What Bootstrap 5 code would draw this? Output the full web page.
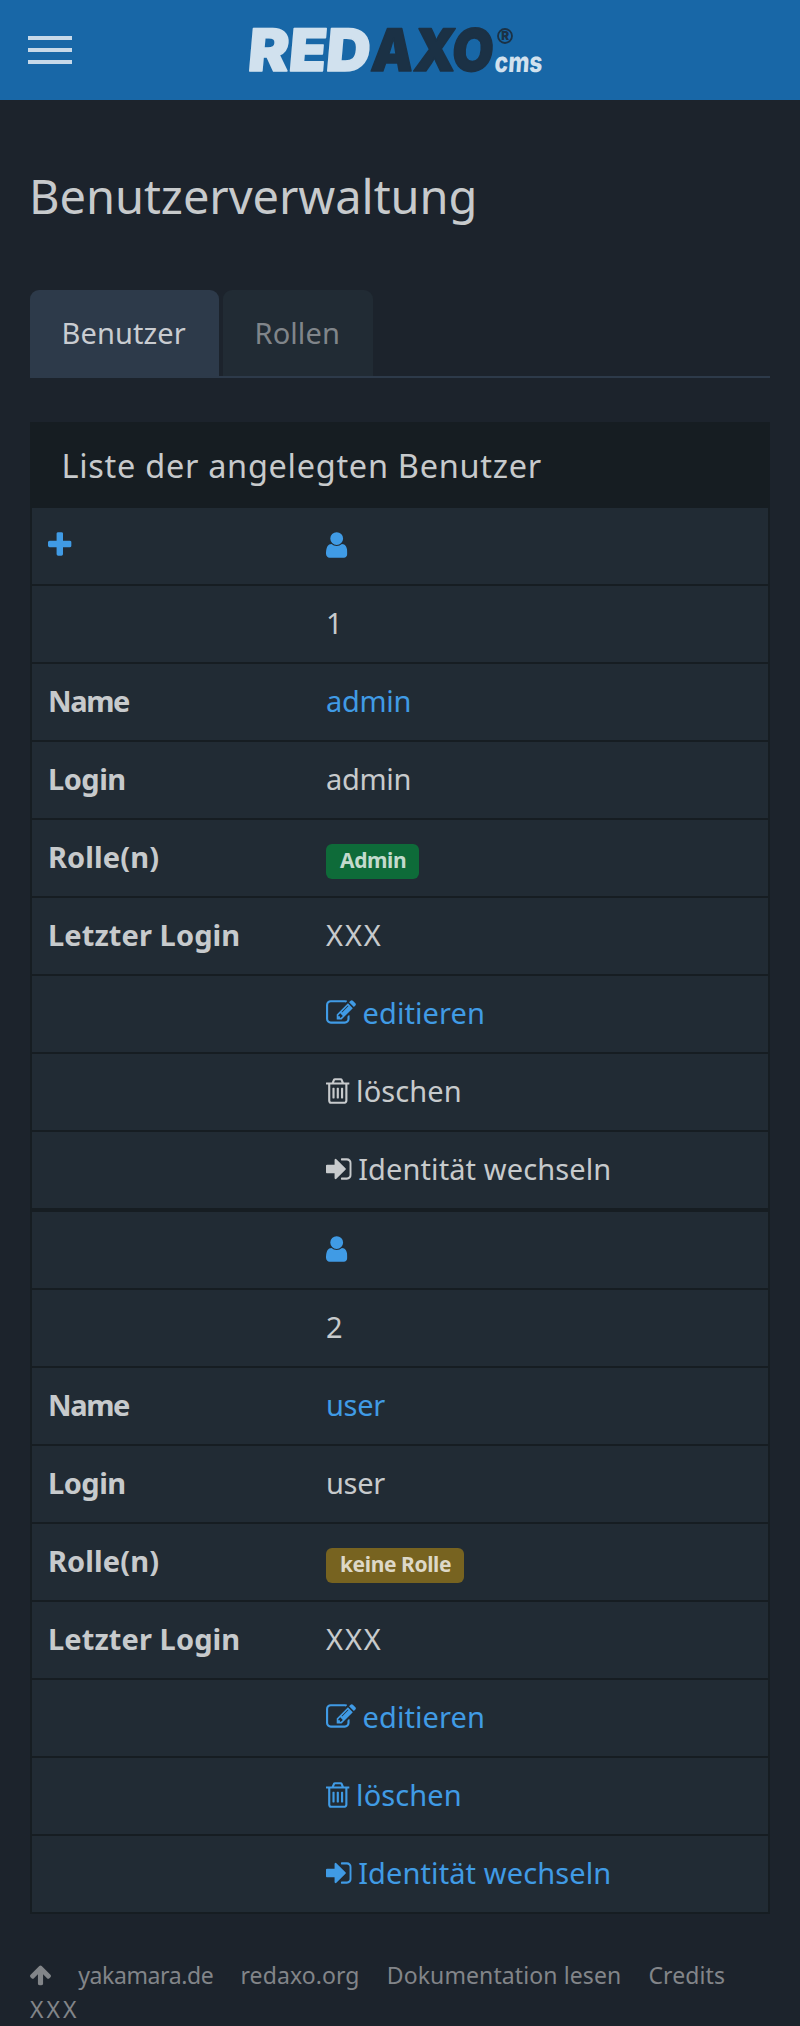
<!DOCTYPE html>
<html lang="de">
<head>
<meta charset="utf-8">
<meta name="viewport" content="width=device-width, initial-scale=1">
<title>Benutzerverwaltung</title>
<link href="https://cdn.jsdelivr.net/npm/bootstrap@5.3.0/dist/css/bootstrap.min.css" rel="stylesheet">
<style>
  body { background: #1c232c; color: #c7cacc; font: 29px/44px "Noto Sans", "Open Sans", sans-serif; letter-spacing: .1px; overflow-x: hidden; }
  a { color: #409be5; text-decoration: none; }
  .topbar { height: 100px; background: #1867a7; }
  .burger { width: 44px; height: 28px; margin-left: 28px; }
  .burger span { height: 4px; background: #c7d9e9; }
  .brand-logo { margin-left: 168px; overflow: visible; }
  .wrap { padding: 0 30px; }
  h1 { font-size: 47px; line-height: 56px; font-weight: 400; letter-spacing: -.05px; padding-top: 68px; margin: 0 0 0 -1px; }
  .nav-tabs { --bs-nav-tabs-border-width: 2px; --bs-nav-tabs-border-color: #2d3a4a; margin-top: 66px; gap: 4px; }
  .nav-tabs .nav-link { height: 86px; margin: 0; border: 0; padding: 0 31.5px; line-height: 86px; border-radius: 9px 9px 0 0; background: #212b34; color: #80858a; width: 150px; letter-spacing: .1px; }
  .nav-tabs .nav-link.active { height: 88px; margin-bottom: -2px; width: 189px; background: #2d3a4a; color: #c9ccd1; }
  .panel { margin-top: 44px; background: #161d22; padding: 0 2px 2px; }
  .panel-title { height: 86px; padding-left: 29.5px; font-size: 32.5px; line-height: 88px; letter-spacing: .7px; font-weight: 400; margin: 0; }
  .entry + .entry { margin-top: 4px; }
  .entry { display: grid; gap: 2px; }
  .line { display: grid; grid-template-columns: 278px 1fr; height: 76px; padding: 15px 16px 0; background: #212b34; }
  .line b { font-weight: 700; }
  .line .key-tight { letter-spacing: -1.4px; }
  .line .key-snug { letter-spacing: -.5px; }
  .line .val-snug { letter-spacing: -.3px; }
  .ic { height: 30px; fill: currentColor; vertical-align: -4.3px; margin-right: 6.5px; overflow: visible; }
  .tag { height: 35px; margin-top: 9px; border-radius: 6px; padding: 0 14px; font-size: 21px; line-height: 33px; font-weight: 700; letter-spacing: -.4px; justify-self: start; white-space: nowrap; }
  .tag-ok { background: #0e6b39; color: #c3dacd; width: 93px; }
  .tag-warn { background: #776320; color: #ddd8c7; width: 138px; }
  .wide-x { letter-spacing: 1.9px; }
  footer { font-size: 23px; line-height: 34px; color: #828589; margin-top: 44px; letter-spacing: .1px; }
  footer a { color: inherit; }
  footer .ic { height: 24px; width: 21px; vertical-align: -3.4px; margin: 0; }
  .foot-links { gap: 27.2px; }
  .foot-x { letter-spacing: 3px; }
</style>
</head>
<body>
<svg class="d-none">
  <symbol id="plus" viewBox="192 0 1408 1792"><path d="M1600 736v192q0 40-28 68t-68 28h-416v416q0 40-28 68t-68 28h-192q-40 0-68-28t-28-68v-416h-416q-40 0-68-28t-28-68v-192q0-40 28-68t68-28h416v-416q0-40 28-68t68-28h192q40 0 68 28t28 68v416h416q40 0 68 28t28 68z"/></symbol>
  <symbol id="user" viewBox="256 0 1280 1792"><path d="M1536 1399q0 109-62.5 187t-150.5 78h-854q-88 0-150.5-78t-62.5-187q0-85 8.5-160.5t31.5-152 58.5-131 94-89 134.5-34.5q131 128 313 128t313-128q76 0 134.5 34.5t94 89 58.5 131 31.5 152 8.5 160.5zm-256-887q0 159-112.5 271.5t-271.5 112.5-271.5-112.5-112.5-271.5 112.5-271.5 271.5-112.5 271.5 112.5 112.5 271.5z"/></symbol>
  <symbol id="edit" viewBox="0 0 1792 1792"><path d="M888 1184l116-116-152-152-116 116v56h96v96h56zm440-720q-16-16-33 1l-350 350q-17 17-1 33t33-1l350-350q17-17 1-33zm80 594v190q0 119-84.5 203.5t-203.5 84.5h-832q-119 0-203.5-84.5t-84.5-203.5v-832q0-119 84.5-203.5t203.5-84.5h832q63 0 117 25 15 7 18 23 3 17-9 29l-49 49q-14 14-32 8-23-6-45-6h-832q-66 0-113 47t-47 113v832q0 66 47 113t113 47h832q66 0 113-47t47-113v-126q0-13 9-22l64-64q15-15 35-7t20 29zm-96-738l288 288-672 672h-288v-288zm444 132l-92 92-288-288 92-92q28-28 68-28t68 28l152 152q28 28 28 68t-28 68z"/></symbol>
  <symbol id="trash" viewBox="192 0 1408 1792"><path d="M704 736v576q0 14-9 23t-23 9h-64q-14 0-23-9t-9-23v-576q0-14 9-23t23-9h64q14 0 23 9t9 23zm256 0v576q0 14-9 23t-23 9h-64q-14 0-23-9t-9-23v-576q0-14 9-23t23-9h64q14 0 23 9t9 23zm256 0v576q0 14-9 23t-23 9h-64q-14 0-23-9t-9-23v-576q0-14 9-23t23-9h64q14 0 23 9t9 23zm128 724v-948h-896v948q0 22 7 40.5t14.5 27 10.5 8.5h832q3 0 10.5-8.5t14.5-27 7-40.5zm-672-1076h448l-48-117q-7-9-17-11h-317q-10 2-17 11zm928 32v64q0 14-9 23t-23 9h-96v948q0 83-47 143.5t-113 60.5h-832q-66 0-113-58.5t-47-141.5v-952h-96q-14 0-23-9t-9-23v-64q0-14 9-23t23-9h309l70-167q15-37 54-63t79-26h320q40 0 79 26t54 63l70 167h309q14 0 23 9t9 23z"/></symbol>
  <symbol id="signin" viewBox="128 0 1536 1792"><path d="M1312 896q0 26-19 45l-544 544q-19 19-45 19t-45-19-19-45v-288h-448q-26 0-45-19t-19-45v-384q0-26 19-45t45-19h448v-288q0-26 19-45t45-19 45 19l544 544q19 19 19 45zm352-352v704q0 119-84.5 203.5t-203.5 84.5h-320q-13 0-22.5-9.5t-9.5-22.5q0-4-1-20t-.5-26.5 3-23.5 10-19.5 20.5-6.5h320q66 0 113-47t47-113v-704q0-66-47-113t-113-47h-312l-11.5-1-11.5-3-8-5.5-7-9-2-13.5q0-4-1-20t-.5-26.5 3-23.5 10-19.5 20.5-6.5h320q119 0 203.5 84.5t84.5 203.5z"/></symbol>
  <symbol id="up" viewBox="117 0 1558 1792"><path d="M1675 971q0 51-37 90l-75 75q-38 38-91 38-54 0-90-38l-294-293v704q0 52-37.5 84.5t-90.5 32.5h-128q-53 0-90.5-32.5t-37.5-84.5v-704l-294 293q-36 38-90 38t-90-38l-75-75q-38-38-38-90 0-53 38-91l651-651q35-37 90-37 54 0 91 37l651 651q37 39 37 91z"/></symbol>
</svg>

<header class="topbar d-flex align-items-center">
  <div class="burger d-flex flex-column justify-content-between"><span></span><span></span><span></span></div>
  <svg class="brand-logo" width="320" height="90" viewBox="240 5 320 90" font-family="Inter, 'Liberation Sans', sans-serif" font-weight="900">
    <g transform="translate(247 71.2) skewX(-5)" font-size="58.5" stroke-width="1.6" stroke-linejoin="round">
      <text x="0" y="0" textLength="122" lengthAdjust="spacingAndGlyphs" fill="#d1e1ee" stroke="#d1e1ee">RED</text>
      <text x="123" y="0" textLength="122" lengthAdjust="spacingAndGlyphs" fill="#1b3145" stroke="#1b3145">AXO</text>
    </g>
    <circle cx="505" cy="36" r="7" fill="none" stroke="#1b3145" stroke-width="1.8"/>
    <text x="501.3" y="40.3" font-size="12" textLength="8" lengthAdjust="spacingAndGlyphs" fill="#1b3145">R</text>
    <text transform="translate(494 71.5) skewX(-4)" font-size="28" font-weight="800" textLength="48" lengthAdjust="spacingAndGlyphs" fill="#d1e1ee">cms</text>
  </svg>
</header>

<main class="wrap">
  <h1>Benutzerverwaltung</h1>
  <ul class="nav nav-tabs">
    <li class="nav-item"><a class="nav-link active" href="#">Benutzer</a></li>
    <li class="nav-item"><a class="nav-link" href="#">Rollen</a></li>
  </ul>

  <section class="panel">
    <h2 class="panel-title">Liste der angelegten Benutzer</h2>
    <div class="entry">
      <div class="line"><a href="#"><svg class="ic" width="23.6"><use href="#plus"/></svg></a><a href="#"><svg class="ic" width="21.4"><use href="#user"/></svg></a></div>
      <div class="line"><b></b><span>1</span></div>
      <div class="line"><b class="key-tight">Name</b><a class="val-snug" href="#">admin</a></div>
      <div class="line"><b class="key-snug">Login</b><span class="val-snug">admin</span></div>
      <div class="line"><b>Rolle(n)</b><span class="tag tag-ok">Admin</span></div>
      <div class="line"><b>Letzter Login</b><span class="wide-x">XXX</span></div>
      <div class="line"><b></b><a href="#"><svg class="ic" width="30"><use href="#edit"/></svg>editieren</a></div>
      <div class="line"><b></b><span><svg class="ic" width="23.6"><use href="#trash"/></svg>löschen</span></div>
      <div class="line"><b></b><span><svg class="ic" width="25.7"><use href="#signin"/></svg>Identität wechseln</span></div>
    </div>
    <div class="entry">
      <div class="line"><b></b><a href="#"><svg class="ic" width="21.4"><use href="#user"/></svg></a></div>
      <div class="line"><b></b><span>2</span></div>
      <div class="line"><b class="key-tight">Name</b><a class="val-snug" href="#">user</a></div>
      <div class="line"><b class="key-snug">Login</b><span class="val-snug">user</span></div>
      <div class="line"><b>Rolle(n)</b><span class="tag tag-warn">keine Rolle</span></div>
      <div class="line"><b>Letzter Login</b><span class="wide-x">XXX</span></div>
      <div class="line"><b></b><a href="#"><svg class="ic" width="30"><use href="#edit"/></svg>editieren</a></div>
      <div class="line"><b></b><a href="#"><svg class="ic" width="23.6"><use href="#trash"/></svg>löschen</a></div>
      <div class="line"><b></b><a href="#"><svg class="ic" width="25.7"><use href="#signin"/></svg>Identität wechseln</a></div>
    </div>
  </section>
</main>

<footer class="wrap">
  <div class="foot-links d-flex text-nowrap">
    <a href="#"><svg class="ic"><use href="#up"/></svg></a>
    <a href="#" style="letter-spacing:-.4px">yakamara.de</a>
    <a href="#">redaxo.org</a>
    <a href="#">Dokumentation lesen</a>
    <a href="#">Credits</a>
  </div>
  <div class="foot-x">XXX</div>
</footer>
<script src="https://cdn.jsdelivr.net/npm/bootstrap@5.3.0/dist/js/bootstrap.bundle.min.js"></script>
</body>
</html>
